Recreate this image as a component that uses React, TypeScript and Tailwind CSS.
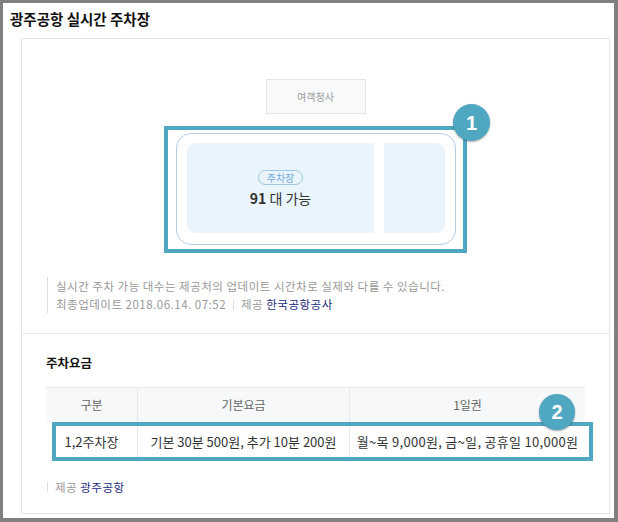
import React from 'react';

const font = { fontFamily: '"Noto Sans CJK KR", "Noto Sans", sans-serif' };

const Marker: React.FC<{ n: number; className: string }> = ({ n, className }) => (
  <div
    className={`absolute flex items-center justify-center rounded-full bg-[#4fa7c1] text-white font-bold text-[20px] shadow-[0_1px_2px_rgba(0,0,0,0.35)] ${className}`}
    style={{ fontFamily: '"Liberation Sans", Arial, sans-serif' }}
  >
    {n}
  </div>
);

export default function App() {
  return (
    <div className="w-[618px] h-[522px] bg-[#808080] pl-[3px] pt-[3px] pr-[4px] pb-[4px]" style={font}>
      <div className="h-full bg-white flex flex-col">
        <h1 className="pl-[7px] pt-[6px] h-[35px] text-[14.5px] font-bold text-[#111] leading-[20px]">
          광주공항 실시간 주차장
        </h1>

        <div className="ml-[18px] mr-[4px] mb-[4px] flex-1 border border-[#e4e4e4] flex flex-col">
          {/* 실시간 주차 */}
          <div className="pt-[40px] pb-[20px] px-[24px] flex flex-col">
            <div className="self-center w-[100px] h-[35px] border border-[#e3e6e9] bg-[#f8f9fa] flex items-center justify-center text-[10px] text-[#999]">
              여객청사
            </div>

            <div className="self-center relative mt-[19px] ml-[1px]">
              <div className="w-[280px] h-[112px] rounded-[15px] border border-[#b8cde0] bg-white pl-[10px] pr-[10px] pt-[9px] pb-[11px] flex gap-[10px]">
                <div className="w-[187px] h-[90px] rounded-l-[9px] bg-[#e9f4fd] flex flex-col items-center justify-center">
                  <span className="h-[15px] px-[8px] rounded-full border border-[#9cc7e6] text-[10px] leading-[13px] text-[#74abdb]">
                    주차장
                  </span>
                  <span className="mt-[4px] text-[14px] leading-[18px] text-[#333]">
                    <b className="font-bold">91</b> 대 가능
                  </span>
                </div>
                <div className="w-[61px] h-[90px] rounded-r-[9px] bg-[#e9f4fd]" />
              </div>
              <div className="absolute left-[-12px] right-[-11px] top-[-7px] bottom-[-8px] border-[4px] border-[#4fa7c1] pointer-events-none" />
              <Marker n={1} className="left-[277px] top-[-29px] w-[37px] h-[37px]" />
            </div>

            <div className="mt-[32px] ml-[1px] border-l border-[#dcdcdc] pl-[8px] text-[11.5px] tracking-[0.5px] leading-[18px] text-[#999]">
              <p>실시간 주차 가능 대수는 제공처의 업데이트 시간차로 실제와 다를 수 있습니다.</p>
              <p>
                최종업데이트 2018.06.14. 07:52
                <span className="inline-block mx-[7px] w-px h-[10px] bg-[#ddd] align-[-1px]" />
                제공 <span className="text-[#1b2a7a]">한국공항공사</span>
              </p>
            </div>
          </div>

          {/* 주차요금 */}
          <div className="border-t border-[#e8e8e8] pt-[20px] px-[24px]">
            <h2 className="text-[12.5px] font-bold leading-[18px] text-[#111]">주차요금</h2>

            <div className="relative mt-[15px]">
              <div className="grid grid-cols-[91px_212px_236px] border-t border-[#e6e9ec] text-center">
                <div className="h-[34px] bg-[#f6f8fa] flex items-center justify-center text-[12px] text-[#666]">구분</div>
                <div className="h-[34px] bg-[#f6f8fa] border-l border-[#e6e9ec] flex items-center justify-center text-[12px] text-[#666]">기본요금</div>
                <div className="h-[34px] bg-[#f6f8fa] border-l border-[#e6e9ec] flex items-center justify-center text-[12px] text-[#666]">1일권</div>
                <div className="h-[40px] flex items-center justify-center text-[13px] text-[#333] whitespace-nowrap">1,2주차장</div>
                <div className="h-[40px] border-l border-[#e6e9ec] flex items-center justify-center text-[13px] text-[#333] whitespace-nowrap">기본 30분 500원, 추가 10분 200원</div>
                <div className="h-[40px] border-l border-[#e6e9ec] flex items-center justify-center text-[13px] tracking-[0.3px] text-[#333] whitespace-nowrap">월~목 9,000원, 금~일, 공휴일 10,000원</div>
              </div>
              <div className="absolute left-[6px] right-[-8px] top-[35px] h-[39px] border-[4px] border-[#4fa7c1] pointer-events-none" />
              <Marker n={2} className="left-[493px] top-[7px] w-[36px] h-[36px]" />
            </div>

            <div className="mt-[16px] ml-[1px] flex items-center text-[11.5px] tracking-[0.5px] leading-[18px] text-[#999]">
              <span className="inline-block w-px h-[10px] bg-[#ddd] mr-[7px]" />
              제공&nbsp;<span className="text-[#1b2a7a]">광주공항</span>
            </div>
          </div>
        </div>
      </div>
    </div>
  );
}
